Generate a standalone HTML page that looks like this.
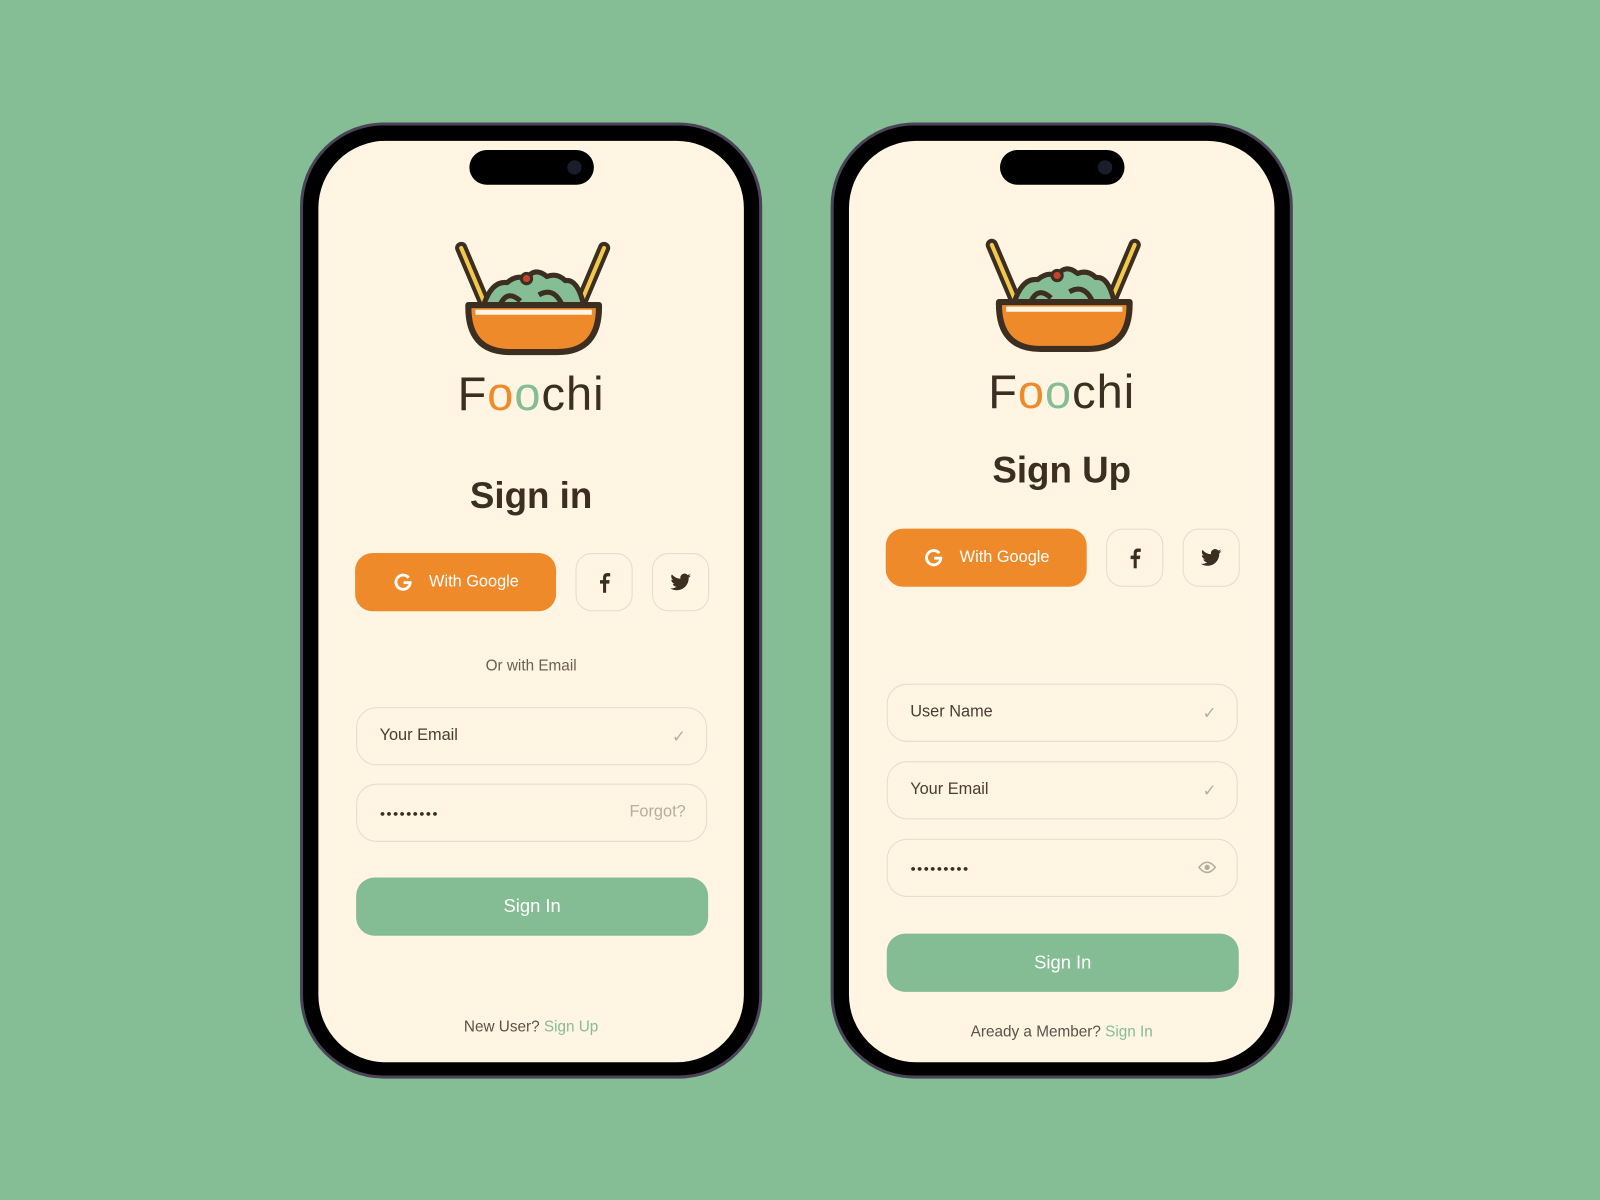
<!DOCTYPE html>
<html><head><meta charset="utf-8"><style>
html,body{margin:0;padding:0;}
body{width:1600px;height:1200px;background:#85bd94;overflow:hidden;font-family:"Liberation Sans",sans-serif;}
#wrap{position:absolute;left:0;top:0;width:1568px;height:1176px;transform:scale(1.0204);transform-origin:0 0;}
.phone{position:absolute;top:120px;width:447px;height:931px;border:3px solid #4b4459;border-radius:82px;background:#000;}
.screen{position:absolute;left:15px;top:15px;right:15px;bottom:13px;background:#fff5e2;border-radius:66px;overflow:hidden;}
.island{position:absolute;left:148px;top:9px;width:122px;height:34px;background:#000;border-radius:17px;}
.island i{position:absolute;right:12px;top:10px;width:14px;height:14px;border-radius:50%;background:#1a1d2a;}
.logo{position:absolute;left:130px;width:160px;height:120px;}
.brand{position:absolute;left:0;width:100%;text-align:center;font-size:46px;color:#3d2e22;letter-spacing:1px;}
.title{position:absolute;left:0;width:100%;text-align:center;font-size:36px;font-weight:bold;color:#3d2e22;}
.gbtn{position:absolute;left:36px;width:197px;height:57px;border-radius:17px;background:#ef8a2b;color:#fff;font-size:16px;display:flex;align-items:center;justify-content:center;gap:14px;}
.sq{position:absolute;width:54px;height:55px;border:1px solid #e8dcc8;border-radius:16px;display:flex;align-items:center;justify-content:center;}
.inp{position:absolute;left:37px;width:342px;height:55px;border:1px solid #e8dcc8;border-radius:20px;font-size:16px;color:#4a3d33;}
.inp span.l{position:absolute;left:22px;top:18px;}
.inp .r{position:absolute;right:20px;top:18px;color:#b8aca0;}
.btn{position:absolute;left:37px;width:345px;height:57px;border-radius:18px;background:#84bd94;color:#fff;font-size:18px;text-align:center;line-height:57px;}
.foot{position:absolute;left:0;width:100%;text-align:center;font-size:15px;color:#5c5048;}
.foot b{font-weight:normal;color:#84bd94;}
.inp span.dots{letter-spacing:1px;font-size:9px;color:#3d2e22;top:23px;}
</style></head><body><div id="wrap">
<svg width="0" height="0" style="position:absolute"><defs>
<g id="bowl">
<path d="M10 10 L32 62" stroke="#3d2e22" stroke-width="12" stroke-linecap="round"/>
<path d="M10 10 L32 62" stroke="#f2c94c" stroke-width="4" stroke-linecap="round"/>
<path d="M150 10 L128 62" stroke="#3d2e22" stroke-width="12" stroke-linecap="round"/>
<path d="M150 10 L128 62" stroke="#f2c94c" stroke-width="4" stroke-linecap="round"/>
<path d="M32 66 Q40 42 55 44 Q64 36 74 40 Q82 28 94 38 Q104 34 112 42 Q124 40 130 66 Z" fill="#85bd94" stroke="#3d2e22" stroke-width="5" stroke-linejoin="round"/>
<circle cx="74" cy="40" r="5" fill="#c4452d" stroke="#3d2e22" stroke-width="3"/>
<path d="M48 66 Q55 50 68 62" fill="none" stroke="#3d2e22" stroke-width="5"/>
<path d="M86 56 Q100 48 108 64" fill="none" stroke="#3d2e22" stroke-width="5"/>
<path d="M17 66 H145 Q146 112 104 112 H58 Q16 112 17 66 Z" fill="#ef8a2b" stroke="#3d2e22" stroke-width="6" stroke-linejoin="round"/>
<path d="M24 73 H138" stroke="#fff5e2" stroke-width="5"/>
</g>
<g id="gg"><path d="M16.5 6.2 A7 7 0 1 0 18 11 H11.5" fill="none" stroke="#fff" stroke-width="2.8"/></g>
</defs></svg>

<!-- LEFT -->
<div class="phone" style="left:294px;">
<div class="screen">
<div class="island"><i></i></div>
<svg class="logo" style="top:95px" viewBox="0 0 160 120"><use href="#bowl"/></svg>
<div class="brand" style="top:221px">F<span style="color:#ef8a2b">o</span><span style="color:#85bd94">o</span>chi</div>
<div class="title" style="top:327px">Sign in</div>
<div class="gbtn" style="top:404px"><svg width="22" height="22" viewBox="0 0 22 22"><use href="#gg"/></svg>With Google</div>
<div class="sq" style="left:252px;top:404px"><svg width="14" height="20" viewBox="0 0 14 20"><path d="M9 20V11h3l.5-3.5H9V5.5c0-1 .3-1.7 1.8-1.7H13V.7C12.5.6 11.4.5 10.3.5 7.8.5 6 2 6 4.8v2.7H3V11h3v9z" fill="#3d2e22"/></svg></div>
<div class="sq" style="left:327px;top:404px"><svg width="20" height="17" viewBox="0 0 24 20"><path d="M24 2.4a10 10 0 0 1-2.8.8A5 5 0 0 0 23.3.4a10 10 0 0 1-3.1 1.2A4.9 4.9 0 0 0 11.8 6 14 14 0 0 1 1.7.9a4.9 4.9 0 0 0 1.5 6.6A4.9 4.9 0 0 1 1 6.9a4.9 4.9 0 0 0 3.9 4.9 5 5 0 0 1-2.2.1 4.9 4.9 0 0 0 4.6 3.4A9.9 9.9 0 0 1 0 17.3 14 14 0 0 0 7.5 19.5c9.1 0 14-7.5 14-14v-.6A10 10 0 0 0 24 2.4z" fill="#3d2e22"/></svg></div>
<div class="foot" style="top:506px;color:#6b5f55">Or with Email</div>
<div class="inp" style="top:555px"><span class="l">Your Email</span><span class="r">&#10003;</span></div>
<div class="inp" style="top:630px"><span class="l dots">●●●●●●●●●</span><span class="r">Forgot?</span></div>
<div class="btn" style="top:722px">Sign In</div>
<div class="foot" style="top:860px">New User? <b>Sign Up</b></div>
</div></div>

<!-- RIGHT -->
<div class="phone" style="left:814px;">
<div class="screen">
<div class="island"><i></i></div>
<svg class="logo" style="top:92px" viewBox="0 0 160 120"><use href="#bowl"/></svg>
<div class="brand" style="top:219px">F<span style="color:#ef8a2b">o</span><span style="color:#85bd94">o</span>chi</div>
<div class="title" style="top:302px">Sign Up</div>
<div class="gbtn" style="top:380px"><svg width="22" height="22" viewBox="0 0 22 22"><use href="#gg"/></svg>With Google</div>
<div class="sq" style="left:252px;top:380px"><svg width="14" height="20" viewBox="0 0 14 20"><path d="M9 20V11h3l.5-3.5H9V5.5c0-1 .3-1.7 1.8-1.7H13V.7C12.5.6 11.4.5 10.3.5 7.8.5 6 2 6 4.8v2.7H3V11h3v9z" fill="#3d2e22"/></svg></div>
<div class="sq" style="left:327px;top:380px"><svg width="20" height="17" viewBox="0 0 24 20"><path d="M24 2.4a10 10 0 0 1-2.8.8A5 5 0 0 0 23.3.4a10 10 0 0 1-3.1 1.2A4.9 4.9 0 0 0 11.8 6 14 14 0 0 1 1.7.9a4.9 4.9 0 0 0 1.5 6.6A4.9 4.9 0 0 1 1 6.9a4.9 4.9 0 0 0 3.9 4.9 5 5 0 0 1-2.2.1 4.9 4.9 0 0 0 4.6 3.4A9.9 9.9 0 0 1 0 17.3 14 14 0 0 0 7.5 19.5c9.1 0 14-7.5 14-14v-.6A10 10 0 0 0 24 2.4z" fill="#3d2e22"/></svg></div>
<div class="inp" style="top:532px"><span class="l">User Name</span><span class="r">&#10003;</span></div>
<div class="inp" style="top:608px"><span class="l">Your Email</span><span class="r">&#10003;</span></div>
<div class="inp" style="top:684px"><span class="l dots">●●●●●●●●●</span><svg style="position:absolute;right:20px;top:20px" width="18" height="14" viewBox="0 0 18 14"><path d="M1 7Q9-3 17 7Q9 17 1 7Z" fill="none" stroke="#b8aca0" stroke-width="1.5"/><circle cx="9" cy="7" r="2.6" fill="#b8aca0"/></svg></div>
<div class="btn" style="top:777px">Sign In</div>
<div class="foot" style="top:865px">Aready a Member? <b>Sign In</b></div>
</div></div>
</div></body></html>
